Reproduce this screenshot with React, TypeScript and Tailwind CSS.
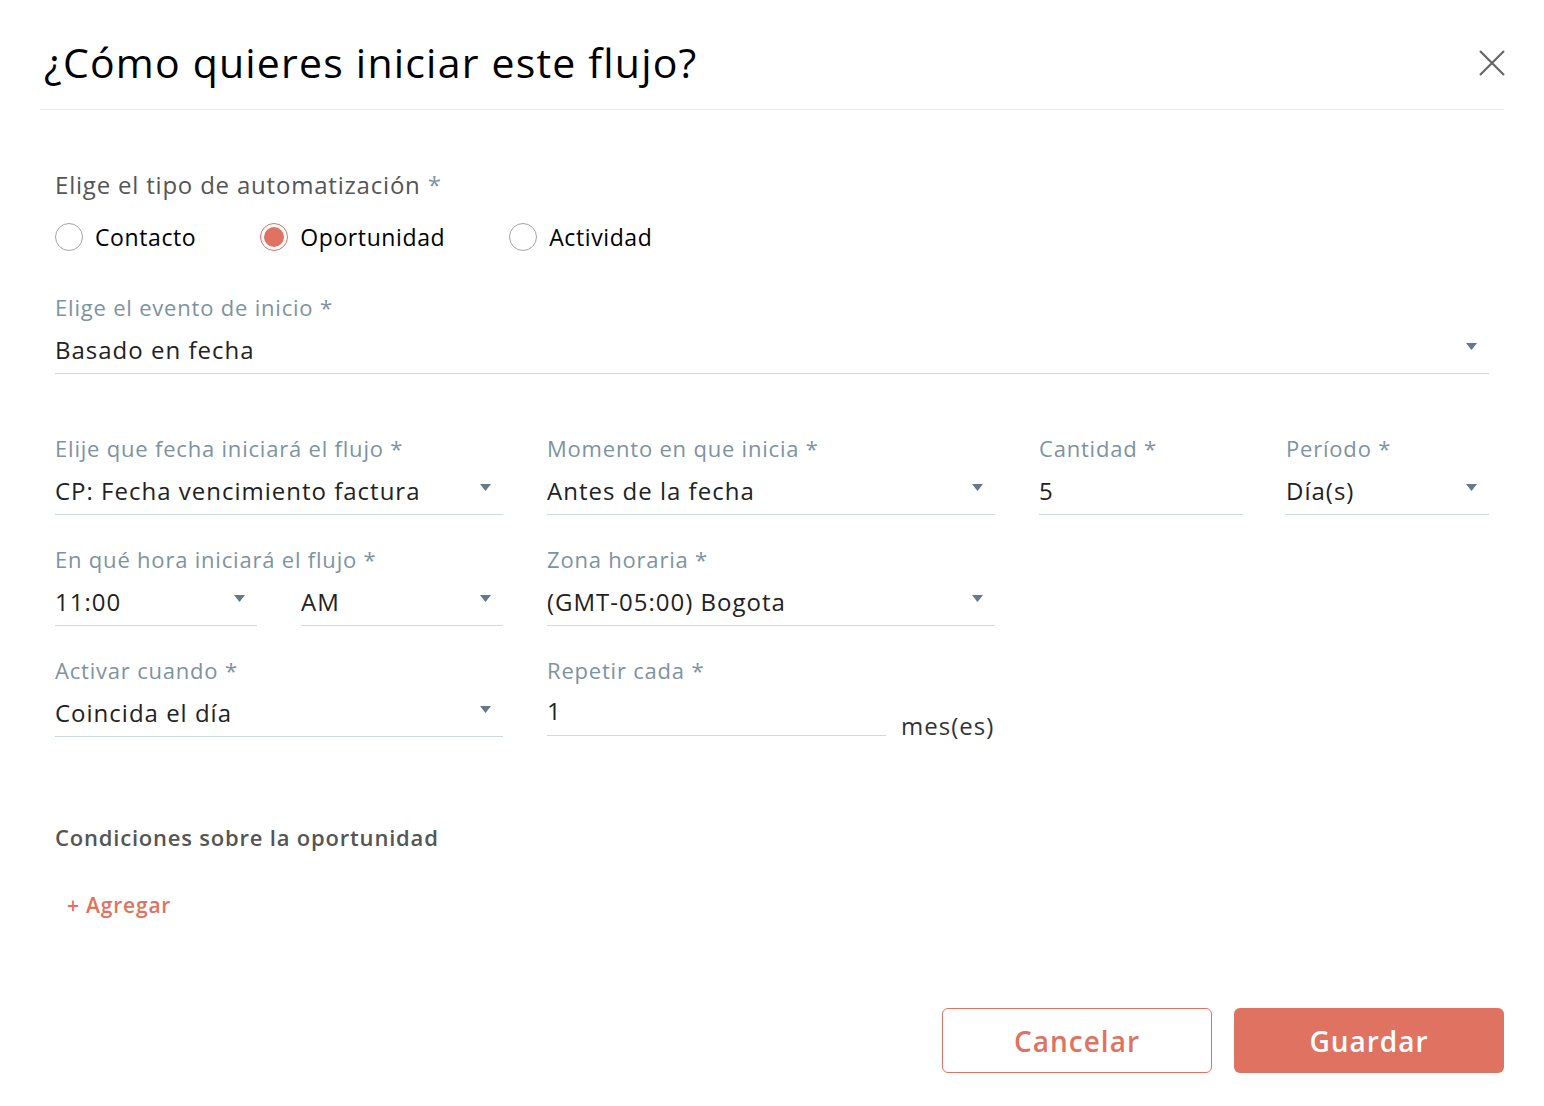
import React from 'react'

const label = 'text-[22px] leading-[28px] tracking-[0.8px] text-[#7d93a1]'
const value = 'text-[24px] tracking-[1px] text-[#222]'

function Caret() {
  return (
    <svg width="11" height="7" viewBox="0 0 11 7" className="mb-[6px] shrink-0">
      <path d="M0 0h11L5.5 7z" fill="#66788a" />
    </svg>
  )
}

function Field({ title, text, select = true, className = '' }: { title?: string; text: string; select?: boolean; className?: string }) {
  return (
    <div className={className}>
      {title && <div className={label}>{title} *</div>}
      <div className="flex h-[53px] items-center justify-between border-b border-[#cfd8df] pt-[6px] pr-[12px]">
        <span className={value}>{text}</span>
        {select && <Caret />}
      </div>
    </div>
  )
}

function Radio({ text, checked = false }: { text: string; checked?: boolean }) {
  return (
    <label className="flex items-center gap-3">
      <span
        className={
          'flex h-[28px] w-[28px] items-center justify-center rounded-full border ' +
          (checked ? 'border-[#e07262]' : 'border-[#a5a5a5]')
        }
      >
        {checked && <span className="h-[20px] w-[20px] rounded-full bg-[#e07262]" />}
      </span>
      <span className="text-[23px] tracking-[0.6px] text-black">{text}</span>
    </label>
  )
}

export default function App() {
  return (
    <div className="min-h-screen bg-white font-['Open_Sans',sans-serif]">
      <div className="mx-[40px] flex h-[110px] items-center justify-between border-b border-[#ececec] pt-[16px] pl-[4px]">
        <h1 className="text-[41px] tracking-[1.2px] text-black">¿Cómo quieres iniciar este flujo?</h1>
        <button className="mr-[-2px]">
          <svg width="28" height="28" viewBox="0 0 28 28">
            <path d="M2 2l24 24M26 2L2 26" stroke="#666" strokeWidth="2.2" />
          </svg>
        </button>
      </div>

      <div className="px-[55px] pt-[61px]">
        <div className="text-[24px] leading-[28px] tracking-[0.8px] text-[#555]">
          Elige el tipo de automatización <span className="text-[#7d93a1]">*</span>
        </div>
        <div className="mt-[21px] flex gap-[64px]">
          <Radio text="Contacto" />
          <Radio text="Oportunidad" checked />
          <Radio text="Actividad" />
        </div>

        <Field className="mt-[38px]" title="Elige el evento de inicio" text="Basado en fecha" />

        <div className="mt-[60px] grid grid-cols-[1fr_1fr_203px_203px] gap-x-[44px] gap-y-[30px]">
          <Field title="Elije que fecha iniciará el flujo" text="CP: Fecha vencimiento factura" />
          <Field title="Momento en que inicia" text="Antes de la fecha" />
          <Field title="Cantidad" text="5" select={false} />
          <Field title="Período" text="Día(s)" />

          <div>
            <div className={label}>En qué hora iniciará el flujo *</div>
            <div className="grid grid-cols-2 gap-x-[44px]">
              <Field text="11:00" />
              <Field text="AM" />
            </div>
          </div>
          <Field title="Zona horaria" text="(GMT-05:00) Bogota" />
          <div />
          <div />

          <Field title="Activar cuando" text="Coincida el día" />
          <div>
            <div className={label}>Repetir cada *</div>
            <div className="flex items-end gap-[15px]">
              <div className="flex h-[52px] w-[339px] items-center border-b border-[#cfd8df] pt-[4px]">
                <span className={value}>1</span>
              </div>
              <span className="mb-[-8px] text-[24px] tracking-[1px] text-[#333]">mes(es)</span>
            </div>
          </div>
        </div>

        <div className="mt-[84px] text-[22px] font-semibold tracking-[0.8px] text-[#555]">
          Condiciones sobre la oportunidad
        </div>
        <button className="mt-[36px] ml-[12px] text-[21px] font-semibold tracking-[0.8px] text-[#e07262]">
          + Agregar
        </button>
      </div>

      <div className="mt-[87px] flex justify-end gap-[22px] pr-[40px]">
        <button className="h-[65px] w-[270px] rounded-[6px] border border-[#e07262] bg-white text-[28px] font-semibold tracking-[1px] text-[#e07262]">
          Cancelar
        </button>
        <button className="h-[65px] w-[270px] rounded-[6px] bg-[#e07262] text-[28px] font-semibold tracking-[1px] text-white">
          Guardar
        </button>
      </div>
    </div>
  )
}
